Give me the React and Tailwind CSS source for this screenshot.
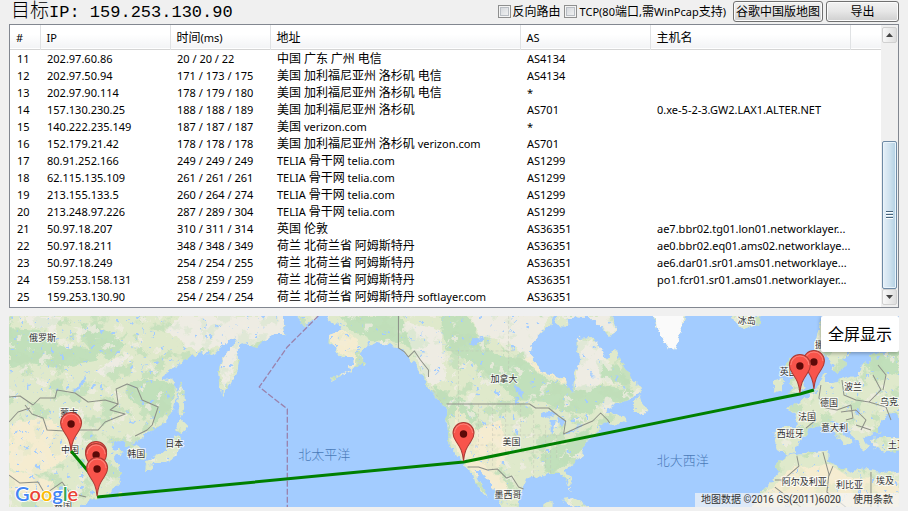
import React from "react";

const CJK = /([\u3000-\u9fff\uff00-\uffef]+)/;

/* Latin runs keep the parent's size, Chinese runs are set one step larger. */
function Mixed({ text }) {
  return text
    .split(CJK)
    .filter(Boolean)
    .map((part, i) =>
      CJK.test(part) ? (
        <span key={i} className="text-[12px]">
          {part}
        </span>
      ) : (
        part
      )
    );
}

const COLUMNS = [
  { name: "#", width: "w-[30px]" },
  { name: "IP", width: "w-[130px]" },
  { name: "时间(ms)", width: "w-[100px]" },
  { name: "地址", width: "w-[250px]" },
  { name: "AS", width: "w-[130px]" },
  { name: "主机名", width: "w-[200px]" },
];

const HOPS = [
  ["11", "202.97.60.86", "20 / 20 / 22", "中国 广东 广州 电信", "AS4134", ""],
  ["12", "202.97.50.94", "171 / 173 / 175", "美国 加利福尼亚州 洛杉矶 电信", "AS4134", ""],
  ["13", "202.97.90.114", "178 / 179 / 180", "美国 加利福尼亚州 洛杉矶 电信", "*", ""],
  ["14", "157.130.230.25", "188 / 188 / 189", "美国 加利福尼亚州 洛杉矶", "AS701", "0.xe-5-2-3.GW2.LAX1.ALTER.NET"],
  ["15", "140.222.235.149", "187 / 187 / 187", "美国 verizon.com", "*", ""],
  ["16", "152.179.21.42", "178 / 178 / 178", "美国 加利福尼亚州 洛杉矶 verizon.com", "AS701", ""],
  ["17", "80.91.252.166", "249 / 249 / 249", "TELIA 骨干网 telia.com", "AS1299", ""],
  ["18", "62.115.135.109", "261 / 261 / 261", "TELIA 骨干网 telia.com", "AS1299", ""],
  ["19", "213.155.133.5", "260 / 264 / 274", "TELIA 骨干网 telia.com", "AS1299", ""],
  ["20", "213.248.97.226", "287 / 289 / 304", "TELIA 骨干网 telia.com", "AS1299", ""],
  ["21", "50.97.18.207", "310 / 311 / 314", "英国 伦敦", "AS36351", "ae7.bbr02.tg01.lon01.networklayer..."],
  ["22", "50.97.18.211", "348 / 348 / 349", "荷兰 北荷兰省 阿姆斯特丹", "AS36351", "ae0.bbr02.eq01.ams02.networklaye..."],
  ["23", "50.97.18.249", "254 / 254 / 255", "荷兰 北荷兰省 阿姆斯特丹", "AS36351", "ae6.dar01.sr01.ams01.networklaye..."],
  ["24", "159.253.158.131", "258 / 259 / 259", "荷兰 北荷兰省 阿姆斯特丹", "AS36351", "po1.fcr01.sr01.ams01.networklayer..."],
  ["25", "159.253.130.90", "254 / 254 / 254", "荷兰 北荷兰省 阿姆斯特丹 softlayer.com", "AS36351", ""],
];

function Toolbar() {
  const button =
    "h-[21px] rounded-[3px] border border-[#707070] bg-linear-to-b from-[#f2f2f2] via-[#e6e6e6] to-[#cfcfcf] text-[12px] leading-[18px] whitespace-nowrap shadow-[inset_0_0_0_1px_#fbfbfb]";
  const box =
    "size-[13px] appearance-none border border-[#8e8f8f] bg-linear-to-br from-[#cfd3d8] to-[#f6f6f6] shadow-[inset_0_0_0_1px_#f4f4f4,inset_0_0_0_2px_#b9bec4] checked:bg-[#3c7fb1]";
  return (
    <header className="flex h-6 items-start justify-between">
      <h1 className="pl-[2px] font-['Liberation_Mono','Noto_Sans_CJK_SC',monospace] text-[17px] leading-6 font-normal whitespace-pre text-black">
        <span className="text-[19px] font-light">目标</span>IP: 159.253.130.90
      </h1>
      <div className="flex items-center gap-[3px] pt-px">
        <label className="flex items-center gap-[2px] text-[12px] leading-4 whitespace-nowrap">
          <input type="checkbox" className={box} />
          反向路由
        </label>
        <label className="flex items-center gap-[3px] pr-1 text-[11px] leading-4 whitespace-nowrap">
          <input type="checkbox" className={box} />
          <span>
            <Mixed text="TCP(80端口,需WinPcap支持)" />
          </span>
        </label>
        <button className={`${button} w-[90px]`}>谷歌中国版地图</button>
        <button className={`${button} w-[73px]`}>导出</button>
      </div>
    </header>
  );
}

function ScrollBar() {
  const arrow =
    "flex h-4 w-[15px] shrink-0 items-center justify-center rounded-[2px] border border-[#d0d0d0] bg-linear-to-r from-[#f8f8f8] to-[#dedede]";
  return (
    <div className="flex w-[17px] shrink-0 flex-col items-center bg-[#f0f0f0] py-[2px]">
      <button aria-label="向上滚动" className={arrow}>
        <svg width="7" height="4" viewBox="0 0 7 4">
          <path d="M3.500 0 7 4H0z" fill="#444" />
        </svg>
      </button>
      <div className="flex-[2]" />
      <div className="flex w-[15px] flex-[3] flex-col items-center justify-center gap-px rounded-[2px] border border-[#6e8aa5] bg-linear-to-r from-[#e6f0f8] via-[#cfe2ef] to-[#b2d0e3] shadow-[inset_0_0_0_1px_#eaf4fb]">
        <span className="h-[2px] w-[7px] border-t border-[#47647c] bg-white" />
        <span className="h-[2px] w-[7px] border-t border-[#47647c] bg-white" />
        <span className="h-[2px] w-[7px] border-t border-[#47647c] bg-white" />
      </div>
      <button aria-label="向下滚动" className={arrow}>
        <svg width="7" height="4" viewBox="0 0 7 4">
          <path d="M3.500 4 0 0H7z" fill="#444" />
        </svg>
      </button>
    </div>
  );
}

function HopTable() {
  return (
    <section className="flex border border-[#828790] bg-white">
      <div className="min-w-0 flex-1 overflow-hidden pb-[2px]">
        <table className="w-full table-fixed border-collapse text-left text-[11px] whitespace-nowrap text-black">
          <thead>
            <tr className="h-6 border-b border-[#d5d5d5] bg-linear-to-b from-white from-40% to-[#f3f4f6]">
              {COLUMNS.map((c) => (
                <th key={c.name} className={`${c.width} border-r border-[#e0e2e4] pt-[2px] pb-0 pl-[6px] leading-4 font-normal`}>
                  <Mixed text={c.name} />
                </th>
              ))}
              <th aria-label="空" />
            </tr>
          </thead>
          <tbody>
            <tr className="h-px" aria-hidden="true">
              <td colSpan={7} className="p-0" />
            </tr>
            {HOPS.map((hop) => (
              <tr key={hop[0]} className="h-[17px]">
                {hop.map((cell, i) => (
                  <td key={i} className="h-[17px] py-0 pl-[7px] leading-[16px]">
                    <Mixed text={cell} />
                  </td>
                ))}
                <td />
              </tr>
            ))}
          </tbody>
        </table>
      </div>
      <ScrollBar />
    </section>
  );
}

const LAND = [
  // Asia
  "M0 306 281 306 283 320 285 335 273 335 262 342 257 348 242 343 235 353 240 360 238 370 227 390 221 396 219 385 218 373 222 360 229 349 237 343 236 337 230 340 223 346 213 355 200 353 189 357 174 368 163 376 162 379 173 380 177 393 173 410 163 423 152 430 147 432 143 438 134 442 130 444 139 447 146 456 144 459 135 459 129 449 123 440 110 446 113 450 121 449 122 452 113 457 117 464 121 475 119 483 110 492 100 497 90 500 80 506 80 517 0 517Z",
  "M298 306 318 316 308 324 302 325 297 314Z",
  // Sakhalin and Japan
  "M179 381 184 390 185 407 180 418 177 403Z",
  "M180 418 189 427 182 433 174 430 177 426Z",
  "M174 435 182 438 179 446 177 456 165 463 157 463 148 465 145 461 158 454 167 450 171 443Z",
  "M146 464 153 466 150 472 145 470Z",
  "M117 493 121 491 120 499 117 498Z",
  // North America
  "M320 306 330 322 338 324 343 330 337 332 329 335 328 343 335 347 335 352 342 357 353 357 352 364 347 371 337 376 330 379 331 381 344 374 357 365 363 360 360 353 367 345 377 343 387 345 398 348 404 351 408 358 415 365 420 373 425 380 428 388 435 397 442 405 447 408 446 427 447 437 450 447 457 457 462 462 465 468 472 474 475 483 482 493 487 498 485 490 478 480 475 470 480 470 487 477 492 487 495 493 499 502 505 517 520 517 518 505 522 487 525 480 533 477 543 476 550 473 557 473 562 475 567 485 570 491 570 481 565 470 573 463 582 457 584 453 582 447 588 439 598 432 598 426 608 420 612 426 627 419 622 416 612 415 604 411 613 405 627 400 640 392 640 387 630 377 623 367 615 349 607 358 602 355 600 347 590 337 577 338 577 350 580 360 573 373 573 393 568 390 565 380 553 377 537 367 530 353 533 340 550 325 553 306Z",
  "M358 362 366 361 364 366 359 366Z",
  "M553 306 557 326 568 327 567 320 575 316 575 306Z",
  "M575 316 590 317 600 327 607 336 614 335 615 325 607 306 578 306Z",
  "M632 407 638 395 640 402 647 410 643 414 633 412Z",
  "M651 306 652 316 657 330 660 335 667 347 674 351 680 330 685 316 685 306Z",
  "M561 500 573 498 583 503 590 509 575 507Z",
  "M543 503 552 501 552 517 541 517Z",
  // Iceland and the British Isles
  "M730 318 737 310 760 310 759 323 748 329 738 327 737 323Z",
  "M787 358 795 357 793 367 800 373 803 382 805 388 798 392 787 395 793 388 788 383 792 378 785 370Z",
  "M773 380 782 378 782 390 772 393Z",
  // Europe
  "M805 398 813 392 817 385 820 380 822 373 825 373 823 382 833 382 850 377 858 375 860 365 870 362 868 355 883 353 908 345 908 420 897 418 892 413 883 417 878 425 880 432 870 435 862 438 867 447 863 453 858 445 855 440 850 432 843 423 833 422 837 427 843 435 852 442 845 447 837 437 828 427 822 427 813 428 807 430 805 435 798 443 793 452 785 455 777 450 774 442 775 430 780 427 795 427 797 423 793 413 787 408 797 403Z",
  "M815 340 813 350 820 357 827 355 830 367 837 373 845 365 843 358 852 352 850 320 820 320Z",
  "M870 438 880 437 908 437 908 451 883 452 873 448Z",
  // Africa
  "M780 460 787 455 803 453 822 451 828 452 827 460 832 465 847 470 852 473 857 468 870 470 887 473 908 470 908 517 745 517 760 493 770 483 777 473 775 465Z",
];

const FOREST = [
  "M9 328 40 330 60 345 95 350 100 360 60 368 30 362 9 368Z",
  "M80 322 110 332 125 345 110 360 90 350Z",
  "M125 384 140 380 160 380 175 385 172 405 155 425 147 410 130 400Z",
  "M340 316 398 316 430 345 415 350 398 342 370 340 350 330Z",
  "M440 316 470 318 480 340 495 355 520 358 545 378 570 388 600 385 635 390 625 402 600 405 590 415 565 412 545 402 515 400 495 380 470 362 445 350Z",
  "M432 385 450 395 468 400 478 420 462 428 450 415 447 440 444 410Z",
  "M540 455 562 445 580 432 592 425 582 450 560 468 545 474Z",
  "M595 360 618 365 630 385 600 380Z",
  "M840 345 898 330 898 375 870 370Z",
];

const PALE = [
  "M25 316 60 316 55 332 30 326Z",
  "M180 316 285 316 283 335 250 345 235 360 225 390 220 370 228 345 195 350 165 330Z",
  "M95 372 115 358 130 354 118 366 105 376Z",
  "M470 316 550 316 530 350 540 368 510 345 480 335Z",
  "M577 338 605 345 600 380 590 392 574 390 578 355Z",
  "M404 322 440 330 445 380 430 386 412 350Z",
  "M555 316 610 316 614 334 575 320Z",
];

const SAND = [
  "M9 425 40 418 80 432 70 455 40 475 9 468Z",
  "M9 470 45 478 60 490 35 496 9 490Z",
  "M328 334 345 330 358 340 354 365 330 378 350 358 334 348Z",
  "M455 405 475 430 500 420 510 450 490 480 465 465 452 440Z",
  "M470 470 500 474 512 500 495 495Z",
  "M525 356 570 378 565 384 530 366Z",
  "M745 507 775 485 790 468 828 465 850 478 898 480 898 511 745 511Z",
];

const LAKES = [
  "M86 374 84 383 76 392 71 393 82 382Z",
  "M540 413 548 411 556 415 548 418 541 416Z",
  "M550 420 555 420 553 433 550 432Z",
  "M557 417 563 420 562 427 557 423Z",
  "M563 434 575 429 574 432 566 435Z",
  "M574 427 582 424 583 426 575 429Z",
  "M514 384 523 393 521 398 515 390Z",
  "M468 344 480 336 484 338 472 346Z",
  "M878 425 884 416 892 413 900 419 900 433 886 435 878 431Z",
  "M615 410 630 402 633 404 620 409Z",
];

const BORDERS = [
  "M9 397 20 396 33 405 40 398 55 398 57 390 75 393 88 402 105 400 118 404 110 410 125 414 105 422 98 430 78 430 65 431 47 430 43 418 32 414 25 405",
  "M118 404 116 389 127 384 137 388 142 400 158 407 152 425 147 430 135 436",
  "M9 422 18 412 30 408",
  "M9 475 20 483 38 482 45 494 62 482 70 493 86 497",
  "M398 316 398 348 404 352 408 357 414 351 420 360 428 370 428 377",
  "M446 404 529 404 535 408 548 408 558 416 565 421 563 434 578 427 592 421 600 413 607 420 609 423",
  "M467 467 478 467 487 470 497 469 506 478 511 476 518 487 523 489",
  "M841 380 843 395 855 400 868 402 880 390 872 375 M868 402 885 407 890 420 M820 385 818 398 825 408 836 410 850 405 M805 428 815 420 812 410 M840 412 855 410 865 420 860 430 M850 405 852 418 845 420 M855 425 870 430 M877 365 885 375 882 390",
  "M796 456 798 466 782 480 774 480 M822 452 828 474 826 492 845 507 M832 466 828 476 M870 472 870 507 M774 487 800 507",
];

const STATES =
  "M450 351H515 M458 351V404 M508 316V372 M455 425H520 M478 404V445 M492 408V470 M492 435H560 M505 404V452 M520 404V440 M533 415V480 M545 425V470 M505 452H545 M540 445 572 440 M556 435V458 M430 386 442 404 M458 404V425 M465 445H492 M550 473V450";

const LABELS = [
  ["俄罗斯", 29, 341],
  ["蒙古", 60, 416],
  ["中国", 61, 453],
  ["韩国", 127, 457],
  ["日本", 165, 447],
  ["加拿大", 490, 382],
  ["美国", 502, 445],
  ["墨西哥", 494, 498],
  ["冰岛", 737, 324],
  ["挪威", 814, 348],
  ["英国", 779, 375],
  ["波兰", 843, 390],
  ["德国", 819, 406],
  ["乌克兰", 879, 405],
  ["法国", 797, 420],
  ["意大利", 820, 431],
  ["西班牙", 776, 437],
  ["土耳其", 887, 448],
  ["阿尔及利亚", 781, 485],
  ["利比亚", 835, 488],
  ["埃及", 875, 484],
  ["泰国", 54, 509],
];

const PINS = [
  [71, 451],
  [96, 480],
  [96, 482],
  [97, 496],
  [463, 461],
  [813, 389],
  [799, 393],
];

/* Scattered ground cover: noise cut off at a threshold and tinted. */
function Cover({ id, seed, frequency, matrix }) {
  return (
    <filter id={id} x="0" y="0" width="100%" height="100%" colorInterpolationFilters="sRGB">
      <feTurbulence type="fractalNoise" baseFrequency={frequency} numOctaves="4" seed={seed} />
      <feColorMatrix values={matrix} />
    </filter>
  );
}

function WorldMap() {
  const area = { x: 9, y: 316, width: 889, height: 191 };
  return (
    <svg
      viewBox="9 316 889 191"
      preserveAspectRatio="xMidYMid slice"
      className="block h-[191px] w-full bg-[#a3ccff]"
      role="img"
      aria-label="路由地图"
    >
      <defs>
        <filter id="coast" x="0" y="0" width="100%" height="100%" colorInterpolationFilters="sRGB">
          <feTurbulence type="fractalNoise" baseFrequency="0.16" numOctaves="3" seed="4" />
          <feDisplacementMap in="SourceGraphic" scale="7" xChannelSelector="R" yChannelSelector="G" />
        </filter>
        <Cover id="green" seed="7" frequency="0.06" matrix="0 0 0 0 0.75 0 0 0 0 0.87 0 0 0 0 0.72 14 0 0 0 -7.8" />
        <Cover id="white" seed="21" frequency="0.08" matrix="0 0 0 0 0.94 0 0 0 0 0.93 0 0 0 0 0.89 14 0 0 0 -8.8" />
        <Cover id="ponds" seed="33" frequency="0.2" matrix="0 0 0 0 0.64 0 0 0 0 0.8 0 0 0 0 1 16 0 0 0 -11.4" />
        <clipPath id="land">
          <path d={LAND.join(" ")} />
        </clipPath>
      </defs>

      <rect {...area} fill="#a3ccff" />
      <g filter="url(#coast)">
        <rect {...area} fill="#a3ccff" />
        <path d={LAND.join(" ")} fill="#dfe9cb" />
        <g clipPath="url(#land)">
          <path d={SAND.join(" ")} fill="#f5ecd0" />
          <path d={PALE.join(" ")} fill="#eeece3" />
          <path d={FOREST.join(" ")} fill="#c1e0bb" />
          <rect {...area} filter="url(#green)" opacity="0.75" />
          <rect {...area} filter="url(#white)" opacity="0.75" />
          <path d={PALE.join(" ")} fill="#eeece3" opacity="0.6" />
          <path d={SAND.join(" ")} fill="#f5ecd0" opacity="0.7" />
          <rect {...area} filter="url(#ponds)" />
        </g>
        <path d="M651 306 657 330 667 347 674 351 680 330 685 306Z" fill="#fafafa" />
        <path d={LAKES.join(" ")} fill="#a3ccff" />
      </g>
      <path d={STATES} fill="none" stroke="#b9bbae" strokeWidth="0.6" strokeDasharray="3 2" opacity="0.6" />
      <path d={BORDERS.join(" ")} fill="none" stroke="#8d9088" strokeWidth="1" strokeLinejoin="round" />
      <path d="M318 316 287 347 259 387 287 409V507" fill="none" stroke="#9a82ac" strokeWidth="1.300" strokeDasharray="6 2" />

      <g className="font-['Noto_Sans_CJK_SC',sans-serif] text-[9px]" fill="#333" stroke="#fff" strokeWidth="2" strokeOpacity="0.75" paintOrder="stroke">
        {LABELS.map(([name, x, y]) => (
          <text key={name} x={x} y={y}>
            {name}
          </text>
        ))}
      </g>
      <g className="font-['Noto_Sans_CJK_SC',sans-serif] text-[13px] font-light" fill="#4a7ab8">
        <text x="298" y="459">北太平洋</text>
        <text x="656" y="465">北大西洋</text>
      </g>

      <path d="M71 451 97 482M97 497 463 462 799 394 813 390" fill="none" stroke="#008000" strokeWidth="3" strokeLinejoin="round" />
      {PINS.map(([x, y], i) => (
        <g key={i} transform={`translate(${x} ${y})`}>
          <path
            d="M0 0C-1-10-3-13-7-19-9-22-10.500-24-10.500-28A10.500 10.500 0 0 1 10.500-28C10.500-24 9-22 7-19 3-13 1-10 0 0Z"
            fill="#f8544b"
            stroke="#a83a34"
            strokeWidth="1"
          />
          <path d="M-9-28A9 9 0 0 1 9-28" fill="none" stroke="#ff9a90" strokeWidth="1" opacity="0.7" />
          <circle cy="-27" r="3.700" fill="#5c0a08" />
        </g>
      ))}
    </svg>
  );
}

function MapPanel() {
  return (
    <section className="relative mt-2 overflow-hidden">
      <WorldMap />
      <button className="absolute top-0 right-0 h-9 w-[78px] rounded-[2px] bg-white text-[16px] leading-5 text-black shadow-[0_1px_4px_rgba(0,0,0,0.35)]">
        全屏显示
      </button>
      <div
        aria-label="Google"
        className="absolute bottom-0 left-[6px] font-['Lato',sans-serif] text-[20px] leading-[28px] font-semibold [paint-order:stroke] [-webkit-text-stroke:2px_white]"
      >
        <span className="text-[#4285f4]">G</span>
        <span className="text-[#ea4335]">o</span>
        <span className="text-[#fbbc05]">o</span>
        <span className="text-[#4285f4]">g</span>
        <span className="text-[#34a853]">l</span>
        <span className="text-[#ea4335]">e</span>
      </div>
      <footer className="absolute right-0 bottom-0 flex h-[14px] items-center gap-3 bg-[#f5f5f5]/70 px-[6px] font-['Roboto','Noto_Sans_CJK_SC',sans-serif] text-[10px] leading-[14px] whitespace-nowrap text-[#333]">
        <span>地图数据 ©2016 GS(2011)6020</span>
        <a href="#terms">使用条款</a>
      </footer>
    </section>
  );
}

export default function App() {
  return (
    <main className="min-h-screen bg-[#f0f0f0] px-[9px] pb-1 font-['Noto_Sans','Noto_Sans_CJK_SC',sans-serif] text-black">
      <Toolbar />
      <HopTable />
      <MapPanel />
    </main>
  );
}
